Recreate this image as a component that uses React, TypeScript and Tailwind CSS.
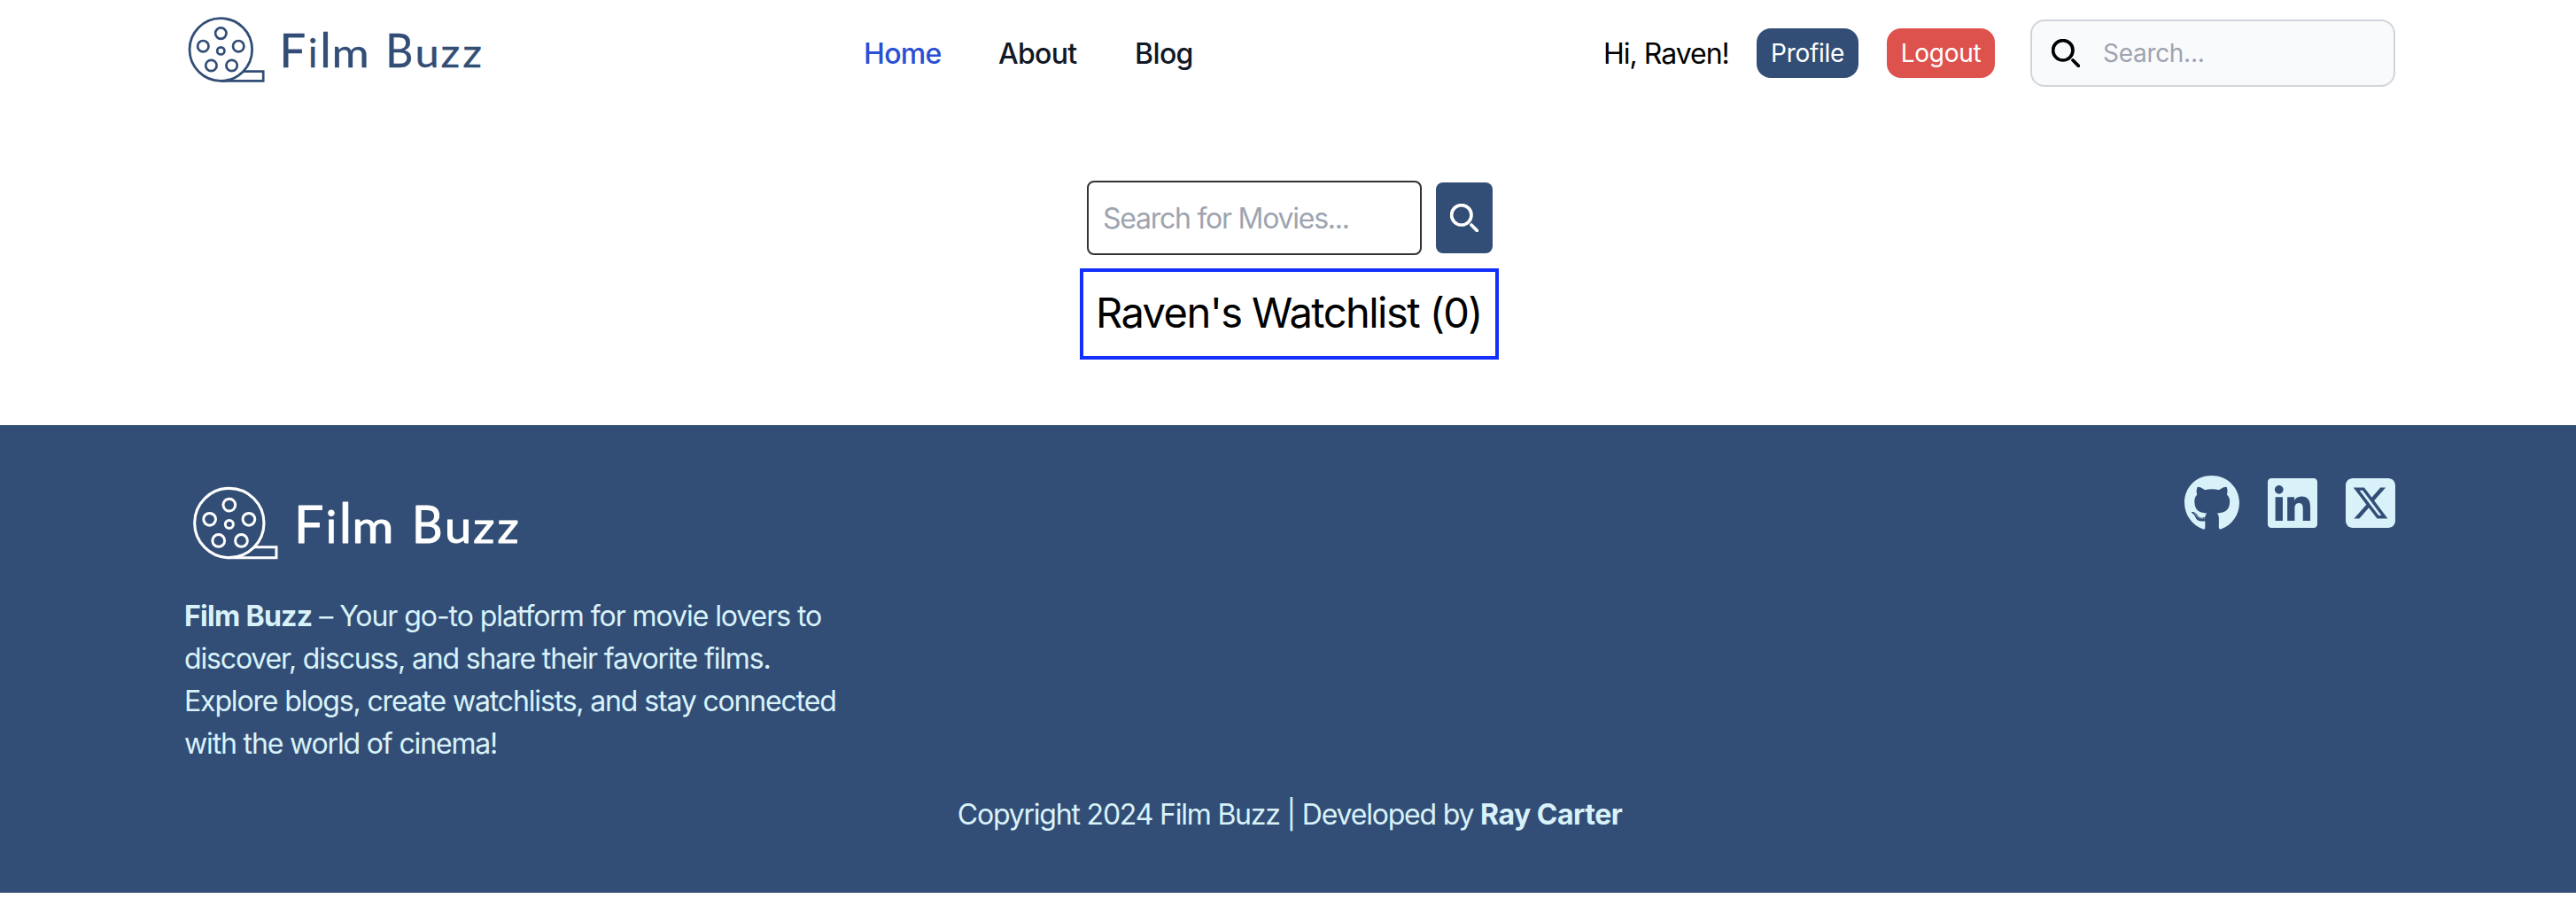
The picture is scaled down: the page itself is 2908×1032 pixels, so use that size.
import { FaGithub, FaLinkedin, FaSquareXTwitter } from "react-icons/fa6";

function Logo({ className, weight }: { className: string; weight: number }) {
  return (
    <svg viewBox="208 16 338 80" className={className} fill="none" stroke="currentColor" aria-label="Film Buzz">
      <circle cx="249.3" cy="56" r="35.3" strokeWidth="2.8" />
      <g strokeWidth="2.7">
        <circle cx="249.3" cy="37.6" r="6.2" />
        <circle cx="269.2" cy="52.2" r="6.2" />
        <circle cx="261.6" cy="74" r="6.2" />
        <circle cx="238.4" cy="74" r="6.2" />
        <circle cx="229.3" cy="52.2" r="6.2" />
        <circle cx="249.3" cy="57.4" r="4.1" />
        <path d="M249.3 91.3H297.2V80.6H274.5" />
      </g>
      <g fill="currentColor" strokeWidth={weight} strokeLinejoin="round" fontFamily="Lato, sans-serif">
        <text y="76.1" fontSize="53">
          <tspan x="315.2">F</tspan>
          <tspan x="347.8" fontSize="45">i</tspan>
          <tspan x="361" fontSize="55">l</tspan>
          <tspan x="374.4" fontSize="45" textLength="42.2" lengthAdjust="spacingAndGlyphs">m</tspan>
          <tspan x="435.2" textLength="31.2" lengthAdjust="spacingAndGlyphs">B</tspan>
          <tspan x="468.5" fontSize="45" textLength="27.2" lengthAdjust="spacingAndGlyphs">u</tspan>
          <tspan x="497.6" fontSize="44" textLength="21.7" lengthAdjust="spacingAndGlyphs">z</tspan>
          <tspan x="522.2" fontSize="44" textLength="21.7" lengthAdjust="spacingAndGlyphs">z</tspan>
        </text>
      </g>
    </svg>
  );
}

function SearchIcon({ className }: { className: string }) {
  return (
    <svg viewBox="0 0 20 20" fill="none" stroke="currentColor" className={className} aria-hidden="true">
      <path strokeLinecap="round" strokeLinejoin="round" strokeWidth="2.3" d="m19 19-4-4m0-7A7 7 0 1 1 1 8a7 7 0 0 1 14 0Z" />
    </svg>
  );
}

function Header() {
  return (
    <header className="mx-auto flex h-[120px] w-[2496px] items-center">
      <Logo className="mb-2 h-20 w-[338px] text-[#324e76]" weight={0.3} />
      <nav className="ml-[429px] flex gap-16 pt-0.5 text-[32px] font-medium text-[#111827]">
        <a className="w-[88px] tracking-[-0.7px] text-[#2a4fd3]">Home</a>
        <a className="w-[90px] tracking-[-0.7px]">About</a>
        <a className="w-[68px] tracking-[-0.6px]">Blog</a>
      </nav>
      <div className="ml-auto flex items-center">
        <span className="w-[141px] pt-0.5 text-[32px] tracking-[-1px] whitespace-nowrap text-black">Hi, Raven!</span>
        <button className="ml-8 h-14 w-[115px] rounded-2xl bg-[#324e76] text-[28px] text-white tracking-[-0.3px]">Profile</button>
        <button className="ml-8 h-14 w-[122px] rounded-2xl bg-[#de524d] text-[28px] text-white tracking-[-0.3px]">Logout</button>
        <div className="ml-10 flex h-[76px] w-[412px] items-center rounded-2xl border-2 border-[#d1d5db] bg-[#f9fafc] pl-[22px]">
          <SearchIcon className="size-8 text-black" />
          <input placeholder="Search..." className="ml-[26px] w-72 text-[28px] tracking-[-0.3px] placeholder:text-[#9ea4b0]" />
        </div>
      </div>
    </header>
  );
}

function Main() {
  return (
    <main className="flex h-[360px] flex-col items-center pt-[84px]">
      <div className="flex items-center gap-4">
        <input placeholder="Search for Movies..." className="h-[84px] w-[378px] rounded-lg border-2 border-[#333333] px-4 text-[32px] tracking-[-1.25px] placeholder:text-[#9ea4b0]" />
        <button className="flex h-20 w-16 items-center justify-center rounded-lg bg-[#324e76] text-white">
          <SearchIcon className="size-8" />
        </button>
      </div>
      <h1 className="mt-[15px] mr-px h-[103px] w-[473px] border-4 border-[#1230fa] pl-[14px] text-[47px] leading-[91px] tracking-[-1.55px] whitespace-nowrap text-black">
        Raven's Watchlist (0)
      </h1>
    </main>
  );
}

function Footer() {
  return (
    <footer className="h-[528px] bg-[#324e76] text-[32px] leading-[48px] text-[#d9f2fa]">
      <div className="mx-auto w-[2496px] pt-14">
        <div className="flex h-[136px] items-start justify-between">
          <Logo className="mt-[10px] ml-[5px] h-[89px] w-[375px] text-white" weight={0.9} />
          <div className="flex gap-8">
            <FaGithub className="h-16 w-[62px]" />
            <FaLinkedin className="h-16 w-14" />
            <FaSquareXTwitter className="h-16 w-14" />
          </div>
        </div>
        <p className="whitespace-nowrap tracking-[-1.15px]">
          <strong className="font-bold tracking-[-0.7px]">Film Buzz</strong>
          <span className="tracking-[-1.07px]"> – Your go-to platform for movie lovers to</span>
          <br />
          discover, discuss, and share their favorite films.
          <br />
          Explore blogs, create watchlists, and stay connected
          <br />
          with the world of cinema!
        </p>
        <p className="mt-8 text-center tracking-[-1.2px]">
          Copyright 2024 Film Buzz | Developed by <strong className="font-bold tracking-[-0.5px]">Ray Carter</strong>
        </p>
      </div>
    </footer>
  );
}

export default function App() {
  return (
    <div className="min-h-screen overflow-hidden bg-white">
      <div className="w-[2912px] font-['Inter',sans-serif]">
        <Header />
        <Main />
        <Footer />
      </div>
    </div>
  );
}
